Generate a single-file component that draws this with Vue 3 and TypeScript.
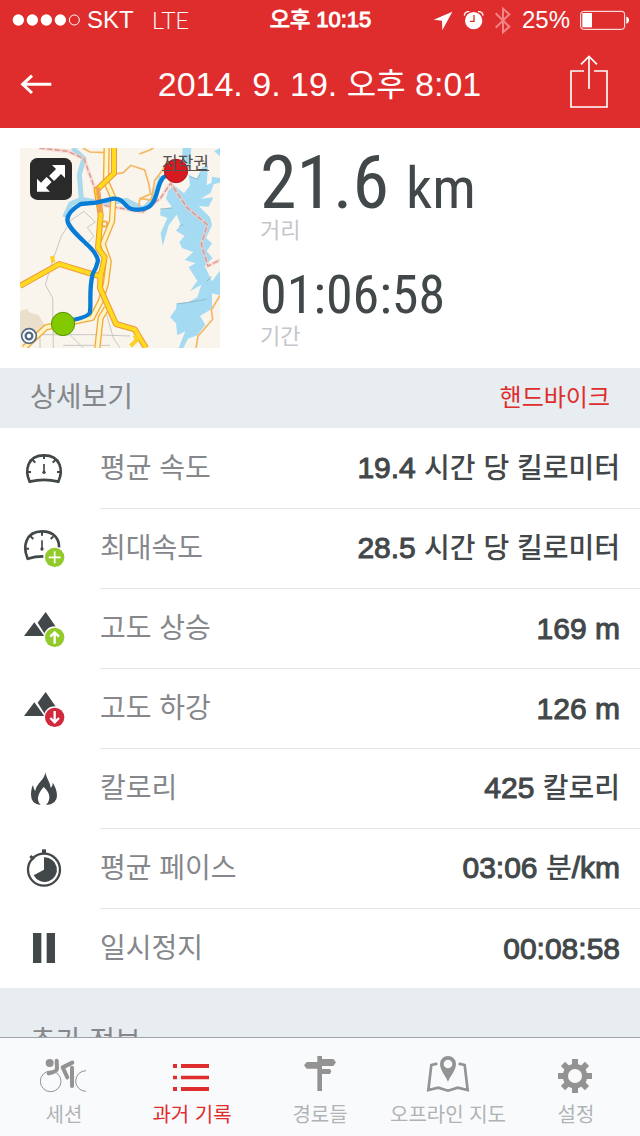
<script setup lang="ts">
type IconName = 'speed' | 'maxSpeed' | 'ascent' | 'descent' | 'calories' | 'pace' | 'pause'
type TabName = 'session' | 'history' | 'routes' | 'offline' | 'settings'

interface Detail {
  icon: IconName
  label: string
  value: string
  unit?: string
  suffix?: string
}

interface Tab {
  name: TabName
  label: string
}

const details: Detail[] = [
  { icon: 'speed', label: '평균 속도', value: '19.4', unit: '시간 당 킬로미터' },
  { icon: 'maxSpeed', label: '최대속도', value: '28.5', unit: '시간 당 킬로미터' },
  { icon: 'ascent', label: '고도 상승', value: '169 m' },
  { icon: 'descent', label: '고도 하강', value: '126 m' },
  { icon: 'calories', label: '칼로리', value: '425', unit: '칼로리' },
  { icon: 'pace', label: '평균 페이스', value: '03:06', unit: '분', suffix: '/km' },
  { icon: 'pause', label: '일시정지', value: '00:08:58' },
]

const tabs: Tab[] = [
  { name: 'session', label: '세션' },
  { name: 'history', label: '과거 기록' },
  { name: 'routes', label: '경로들' },
  { name: 'offline', label: '오프라인 지도' },
  { name: 'settings', label: '설정' },
]

const activeTab: TabName = 'history'
const gearAngles = [0, 45, 90, 135, 180, 225, 270, 315]
</script>

<template>
  <div class="app">
    <header class="top">
      <div class="status">
        <div class="status-left">
          <svg class="signal" viewBox="36 43 207 36" aria-hidden="true">
            <g fill="#fff">
              <circle cx="55" cy="61" r="17" />
              <circle cx="97" cy="61" r="17" />
              <circle cx="139" cy="61" r="17" />
              <circle cx="181" cy="61" r="17" />
            </g>
            <circle cx="223" cy="61" r="15" fill="none" stroke="#fff" stroke-width="3" />
          </svg>
          <span>SKT</span>
          <span class="network">LTE</span>
        </div>
        <div class="clock">오후 10:15</div>
        <div class="status-right">
          <svg class="i-loc" viewBox="333 30 60 63" aria-hidden="true">
            <path d="M391 35 L361 91 L360 62 L335 59 Z" fill="#fff" />
          </svg>
          <svg class="i-alarm" viewBox="426 30 63 63" aria-hidden="true">
            <circle cx="458" cy="62" r="26" fill="#fff" />
            <path d="M430 47 Q431 34 445 35 M471 35 Q485 34 486 47" fill="none" stroke="#fff" stroke-width="4" />
            <path d="M459 45 V64 H447" fill="none" stroke="#df2d2d" stroke-width="4" />
          </svg>
          <svg class="i-bt" viewBox="519 18 54 87" aria-hidden="true">
            <path d="M524 40 L565 80 L546 97 V26 L565 43 L524 83" fill="none" stroke="#f08486" stroke-width="6" />
          </svg>
          <span>25%</span>
          <svg class="i-battery" viewBox="780 31 147 60" aria-hidden="true">
            <rect x="782" y="35" width="132" height="54" rx="9" fill="none" stroke="#fff" stroke-width="3" />
            <rect x="787" y="40" width="29" height="43" fill="#fff" />
            <path d="M919 51 Q927 52 927 61 Q927 70 919 72 Z" fill="#fff" />
          </svg>
        </div>
      </div>
      <div class="titlebar">
        <button class="icon-button back" type="button" aria-label="뒤로">
          <svg viewBox="60 216 102 72" aria-hidden="true">
            <path d="M154 253 H68 M96 227 L68 253 L96 279" fill="none" stroke="#fff" stroke-width="9" />
          </svg>
        </button>
        <h1>2014. 9. 19. <span>오후</span> 8:01</h1>
        <button class="icon-button share" type="button" aria-label="공유">
          <svg viewBox="747 162 120 180" aria-hidden="true">
            <path d="M792 213 H753 V321 H861 V213 H822 M807 267 V169 M783 193 L807 169 L831 193" fill="none" stroke="#fff" stroke-width="5" />
          </svg>
        </button>
      </div>
    </header>

    <main class="content">
      <section class="summary">
        <div class="map">
          <svg class="map-art" viewBox="30 30 600 600" aria-hidden="true">
            <rect x="30" y="30" width="600" height="600" fill="#f9f4ec" />
            <path d="M30 520 L50 512 L60 524 L86 532 L104 562 L84 590 L52 602 L30 592Z" fill="#e9dfca" />
            <g fill="none" stroke="#c9c7c5" stroke-width="3">
              <path d="M176 260 L154 294 L122 386 L106 440 L128 480 L130 630 M178 250 L222 220 L256 252 L232 268 L252 296 L222 324 M70 590 H246 L360 594 M160 622 H300 M90 592 V630 M290 530 L310 600 L330 630 M180 590 L220 630" />
            </g>
            <g fill="#a4dbf3">
              <path d="M518 30 H544 L538 90 L520 110 L516 60Z" />
              <path d="M474 160 L490 140 L522 166 L540 142 L536 110 L560 122 L576 88 L594 84 L590 142 L614 130 L602 164 L572 182 L610 178 L596 206 L566 204 L600 238 L606 262 L588 300 L606 316 L590 340 L608 360 L584 384 L606 430 L630 398 V472 L606 466 L606 512 L570 534 L586 560 L562 592 L534 602 L520 630 H506 L526 580 L502 592 L498 556 L480 538 L498 512 L500 496 L536 492 L562 478 L574 440 L540 460 L562 428 L536 388 L556 376 L524 366 L550 342 L516 330 L508 312 L524 294 L498 278 L512 260 L500 230 L476 262 L458 324 L452 286 L472 240 L450 232 L452 214 L486 208 L468 182Z" />
              <path d="M606 116 L630 120 V134 L604 140Z M612 40 L630 30 V54Z" />
            </g>
            <path d="M500 498 L536 493 L590 484 M450 213 L486 210 M540 116 L562 124 L570 110 M590 430 L606 414 M508 264 L520 260" fill="none" stroke="#88a8b2" stroke-width="2" />
            <path d="M188 30 L222 62 L208 110 L214 184 L182 198 L164 238 M214 184 L270 194 L350 188 L400 214 L432 180 L454 116" fill="none" stroke="#a9d9ed" stroke-width="15" />
            <g fill="none" stroke="#f4b761" stroke-width="5">
              <path d="M218 30 L240 42 L286 44 M388 48 L420 36 L430 30 M318 108 L340 104 L362 82 L404 96 L416 136 L422 168 L390 182 L386 204 M390 182 L424 186 L434 128 L468 82" />
              <path d="M630 472 L604 516 L608 544 L564 594 L558 630" />
            </g>
            <path d="M88 30 L174 40 L222 62 L256 156 L270 200 L398 222 L452 180 L482 136 L532 210 L592 260 L574 320 L594 384 L630 366" fill="none" stroke="#f6cbc3" stroke-width="11" opacity=".6" />
            <path d="M88 30 L174 40 L222 62 L256 156 L270 200 L398 222 L452 180 L482 136 L532 210 L592 260 L574 320 L594 384 L630 366" fill="none" stroke="#d79690" stroke-width="4" stroke-dasharray="16 7" />
            <g fill="none" stroke-linejoin="round">
              <path d="M290 30 L288 130 L310 180 L306 250 L278 318 L296 370 L288 436 L272 490 L246 540 L108 568 L42 630 M290 510 L272 540 L262 630" stroke="#f1ab3c" stroke-width="19" />
              <path d="M290 30 L288 130 L310 180 L306 250 L278 318 L296 370 L288 436 L272 490 L246 540 L108 568 L42 630 M290 510 L272 540 L262 630" stroke="#fff4c5" stroke-width="11" />
              <path d="M312 30 V106 L260 156 L272 230 L264 330 L284 358 L272 416 L148 378 L30 444 M272 400 L270 450 L318 558 L374 574 L408 630" stroke="#ee963b" stroke-width="18" />
              <path d="M312 30 V106 L260 156 L272 230 L264 330 L284 358 L272 416 L148 378 L30 444 M272 400 L270 450 L318 558 L374 574 L408 630" stroke="#ffdb20" stroke-width="12" />
              <path d="M264 148 L270 224" stroke="#f0a257" stroke-width="12" />
              <path d="M126 354 L130 374 M374 592 L380 606 L362 624" stroke="#fbd02a" stroke-width="12" />
              <circle cx="284" cy="258" r="8" stroke="#f1ab3c" stroke-width="5" />
            </g>
            <circle cx="57" cy="594" r="22" fill="#fff" stroke="#556b83" stroke-width="5" />
            <circle cx="57" cy="594" r="10" fill="#fff" stroke="#556b83" stroke-width="7" />
            <path d="M158 552 Q238 538 240 522 C244 494 236 458 248 408 Q260 388 264 368 Q260 348 242 330 C214 302 174 270 172 246 Q172 222 212 198 L258 194 L310 182 C346 180 340 210 370 214 Q404 218 422 202 C446 178 438 144 460 118 L498 98" fill="none" stroke="#087dd7" stroke-width="13" stroke-linejoin="round" />
            <circle cx="498" cy="99" r="35" fill="#d71920" stroke="#b3131c" stroke-width="3" />
            <circle cx="159" cy="558" r="35" fill="#83c900" stroke="#599500" stroke-width="3" />
          </svg>
          <button class="icon-button expand" type="button" aria-label="지도 확대">
            <svg viewBox="60 60 126 126" aria-hidden="true">
              <rect x="60" y="60" width="126" height="126" rx="22" fill="#2b2a2a" />
              <path d="M126 81 H165 V120 L153 108 L132 129 L117 114 L138 93Z" fill="#fff" />
              <path d="M120 161 H81 V122 L93 134 L110 117 L125 132 L108 149Z" fill="#fff" />
              <path d="M111 112 L134 135" stroke="#2b2a2a" stroke-width="4" />
            </svg>
          </button>
          <a class="legal" href="#legal">저작권</a>
        </div>
        <dl class="stats">
          <div class="stat">
            <dd class="distance">21.6 <small>km</small></dd>
            <dt>거리</dt>
          </div>
          <div class="stat">
            <dd class="duration">01:06:58</dd>
            <dt>기간</dt>
          </div>
        </dl>
      </section>

      <div class="section-head">
        <h2>상세보기</h2>
        <a href="#sport">핸드바이크</a>
      </div>

      <dl class="details">
        <div v-for="d in details" :key="d.label" class="row">
          <svg v-if="d.icon === 'speed'" class="row-icon" viewBox="66 228 132 132" aria-hidden="true">
            <path d="M89 335 C74 302 81 256 132 256 C183 256 190 302 175 335 Q132 324 89 335Z" fill="none" stroke="#424749" stroke-width="8" />
            <path d="M132 256 V267 M98 270 L106 278 M166 270 L158 278 M82 306 H93 M182 306 H171" stroke="#424749" stroke-width="6" />
            <path d="M132 282 V308" stroke="#424749" stroke-width="5" />
            <circle cx="132" cy="307" r="5" fill="#424749" />
          </svg>
          <svg v-else-if="d.icon === 'maxSpeed'" class="row-icon" viewBox="66 468 132 132" aria-hidden="true">
            <path d="M130 559 Q105 559 83 566 C68 532 75 484 126 484 C163 484 178 508 177 532" fill="none" stroke="#424749" stroke-width="8" />
            <path d="M126 484 V497 M92 499 L100 507 M160 499 L152 507 M76 536 H87" stroke="#424749" stroke-width="6" />
            <path d="M126 511 V538" stroke="#424749" stroke-width="5" />
            <circle cx="126" cy="537" r="5" fill="#424749" />
            <circle cx="164" cy="562" r="29" fill="#93ca2b" />
            <path d="M164 544 V580 M146 562 H182" stroke="#fff" stroke-width="5" />
          </svg>
          <svg v-else-if="d.icon === 'ascent' || d.icon === 'descent'" class="row-icon" viewBox="66 48 132 132" aria-hidden="true">
            <path d="M137 66 L168 111 L138 138 L113 98Z M103 97 L133 138 H72Z" fill="#424749" />
            <circle cx="164" cy="142" r="33" fill="#fff" />
            <circle cx="164" cy="142" r="29" :fill="d.icon === 'ascent' ? '#93ca2b' : '#d1283d'" />
            <path v-if="d.icon === 'ascent'" d="M164 161 V127 M151 140 L164 127 L177 140" fill="none" stroke="#fff" stroke-width="7" />
            <path v-else d="M164 123 V157 M151 144 L164 157 L177 144" fill="none" stroke="#fff" stroke-width="7" />
          </svg>
          <svg v-else-if="d.icon === 'calories'" class="row-icon" viewBox="66 48 132 132" aria-hidden="true">
            <path d="M136 66 C139 86 150 94 152 113 Q159 108 158 98 C166 110 171 122 171 137 Q171 162 138 165 C154 149 151 128 131 111 C113 132 108 150 122 165 Q93 162 93 134 C93 122 95 113 99 105 Q101 118 106 123 C108 100 135 90 136 66Z" fill="#424749" />
          </svg>
          <svg v-else-if="d.icon === 'pace'" class="row-icon" viewBox="66 288 132 132" aria-hidden="true">
            <circle cx="132" cy="359" r="48" fill="none" stroke="#424749" stroke-width="7" />
            <path d="M126 298 H138 V310 H126Z" fill="#424749" />
            <path d="M91 318 L101 328" stroke="#424749" stroke-width="9" />
            <path d="M132 359 V322 A37 37 0 1 1 101 376Z" fill="#424749" />
          </svg>
          <svg v-else class="row-icon" viewBox="66 528 132 132" aria-hidden="true">
            <path d="M99 549 H124 V639 H99Z M140 549 H165 V639 H140Z" fill="#424749" />
          </svg>
          <div class="row-body">
            <dt>{{ d.label }}</dt>
            <dd>{{ d.value }}<template v-if="d.unit">{{ ' ' }}<span>{{ d.unit }}</span></template>{{ d.suffix }}</dd>
          </div>
        </div>
      </dl>

      <div class="section-head more">
        <h2>추가 정보</h2>
      </div>
    </main>

    <nav class="tabs">
      <a
        v-for="t in tabs"
        :key="t.name"
        :href="'#' + t.name"
        class="tab"
        :class="{ active: t.name === activeTab }"
        :aria-current="t.name === activeTab ? 'page' : undefined"
      >
        <svg v-if="t.name === 'session'" viewBox="120 210 144 120" aria-hidden="true">
          <g fill="none" stroke="#939393" stroke-linejoin="round">
            <circle cx="152" cy="289" r="31" stroke-width="3" />
            <path d="M258 257 A31 31 0 0 0 258 319" stroke-width="3" />
            <path d="M170 227 L171 251 Q170 260 146 265" stroke-width="12" stroke-linecap="round" />
            <path d="M217 233 L188 247 L202 277" stroke-width="12" stroke-linecap="round" />
            <path d="M216 248 V303" stroke-width="12" stroke-linecap="round" />
          </g>
          <circle cx="149" cy="234" r="12" fill="#939393" />
        </svg>
        <svg v-else-if="t.name === 'history'" viewBox="504 210 144 120" aria-hidden="true">
          <path d="M519 237 H531 V249 H519Z M543 237 H627 V249 H543Z M519 272 H531 V283 H519Z M543 272 H627 V283 H543Z M519 306 H531 V318 H519Z M543 306 H627 V318 H543Z" fill="#df2d2d" />
        </svg>
        <svg v-else-if="t.name === 'routes'" viewBox="888 210 144 120" aria-hidden="true">
          <path d="M952 213 H966 V222 H1000 L1008 232 L1000 243 H966 V252 H990 L994 259 L990 267 H966 V318 H952 V251 H920 L912 241 L920 231 H952Z" fill="#939393" />
        </svg>
        <svg v-else-if="t.name === 'offline'" viewBox="312 210 144 120" aria-hidden="true">
          <path d="M352 236 L334 240 L325 315 L355 308 L384 317 L413 308 L443 315 L434 240 L416 236" fill="none" stroke="#939393" stroke-width="8" />
          <path fill-rule="evenodd" d="M384 291 C379 275 360 257 360 237 A24 24 0 0 1 408 237 C408 257 389 275 384 291Z M384 224 A13 13 0 1 0 384 250 A13 13 0 1 0 384 224Z" fill="#939393" />
        </svg>
        <svg v-else viewBox="696 210 144 120" aria-hidden="true">
          <circle cx="765" cy="273" r="29" fill="none" stroke="#939393" stroke-width="16" />
          <rect v-for="a in gearAngles" :key="a" x="756" y="222" width="18" height="20" fill="#939393" :transform="`rotate(${a} 765 273)`" />
        </svg>
        <span>{{ t.label }}</span>
      </a>
    </nav>
  </div>
</template>

<style>
body {
  margin: 0;
}
</style>

<style scoped>
.app {
  display: flex;
  flex-direction: column;
  height: 100vh;
  background: #fff;
  color: #424749;
  font-family: "Liberation Sans", "Noto Sans CJK KR", sans-serif;
}

h1,
h2,
dl,
dd,
dt {
  margin: 0;
  font-weight: 400;
}

a {
  color: inherit;
  text-decoration: none;
}

svg {
  display: block;
}

.icon-button {
  padding: 0;
  border: 0;
  background: none;
}

.top {
  flex: none;
  background: #df2d2d;
  color: #fff;
}

.status {
  display: grid;
  grid-template-columns: 1fr auto 1fr;
  align-items: center;
  height: 40px;
  padding: 0 11px 0 12px;
  font-size: 24px;
  line-height: 40px;
}

.status-left,
.status-right {
  display: flex;
  align-items: center;
}

.status-left {
  gap: 6px;
}

.status-right {
  justify-content: flex-end;
  gap: 10px;
}

.signal {
  width: 69px;
  height: 12px;
}

.network {
  margin-left: 12px;
  font-family: Lato, sans-serif;
  font-weight: 300;
}

.clock {
  font-size: 22px;
  -webkit-text-stroke: 1px currentColor;
}

.i-loc {
  width: 20px;
  height: 21px;
}

.i-alarm {
  width: 21px;
  height: 21px;
}

.i-bt {
  width: 18px;
  height: 29px;
}

.i-battery {
  width: 49px;
  height: 20px;
}

.titlebar {
  display: grid;
  grid-template-columns: 1fr auto 1fr;
  align-items: center;
  height: 88px;
  padding: 0 31px 0 20px;
}

.titlebar h1 {
  font-size: 34px;
  line-height: 40px;
  padding-left: 10px;
}

.titlebar h1 span {
  font-size: 32px;
}

.back svg {
  width: 34px;
  height: 24px;
}

.share {
  justify-self: end;
}

.share svg {
  width: 40px;
  height: 60px;
}

.content {
  flex: 1;
  min-height: 0;
  overflow-y: auto;
  scrollbar-width: none;
}

.summary {
  display: flex;
  gap: 40px;
  padding: 20px;
}

.map {
  position: relative;
  flex: none;
  width: 200px;
  height: 200px;
}

.map-art {
  width: 100%;
  height: 100%;
}

.expand {
  position: absolute;
  top: 10px;
  left: 10px;
}

.expand svg {
  width: 42px;
  height: 42px;
}

.legal {
  position: absolute;
  top: 4px;
  right: 11px;
  color: #55504d;
  font-size: 17px;
  line-height: 24px;
  text-decoration: underline;
}

.stats {
  display: flex;
  flex-direction: column;
  gap: 29px;
  padding-top: 5px;
}

.stat {
  display: flex;
  flex-direction: column;
  gap: 7px;
}

.stat dd {
  font-family: "Roboto Condensed", "Liberation Sans Narrow", "Liberation Sans", sans-serif;
}

.distance {
  font-size: 74px;
  line-height: 60px;
}

.distance small {
  font-size: 58px;
  line-height: 1px;
}

.duration {
  font-size: 54px;
  line-height: 48px;
}

.stat dt {
  color: #c3c6cb;
  font-size: 22px;
  line-height: 22px;
}

.section-head {
  display: flex;
  align-items: center;
  justify-content: space-between;
  height: 60px;
  padding: 0 30px;
  background: #e8edf1;
}

.section-head h2 {
  color: #85878b;
  font-size: 28px;
  line-height: 40px;
}

.section-head a {
  color: #df2d2d;
  font-size: 24px;
  line-height: 40px;
}

.section-head.more {
  height: 108px;
}

.row {
  display: flex;
  align-items: center;
  height: 80px;
}

.row-icon {
  flex: none;
  width: 44px;
  height: 44px;
  margin: 0 34px 0 22px;
}

.row-body {
  display: flex;
  flex: 1;
  align-items: center;
  justify-content: space-between;
  box-sizing: border-box;
  height: 80px;
  padding-right: 20px;
  border-top: 1px solid #e2e5e8;
}

.row:first-child .row-body {
  border-top-color: transparent;
}

.row-body dt {
  color: #85878b;
  font-size: 28px;
  line-height: 40px;
}

.row-body dd {
  font-size: 30px;
  line-height: 40px;
  -webkit-text-stroke: 1px currentColor;
}

.row-body dd span {
  font-size: 28px;
  -webkit-text-stroke-width: 0;
  font-weight: 500;
}

.tabs {
  display: grid;
  flex: none;
  grid-template-columns: repeat(5, 1fr);
  box-sizing: border-box;
  height: 99px;
  border-top: 1px solid #a0a4aa;
  background: #f9fafc;
}

.tab {
  display: flex;
  flex-direction: column;
  align-items: center;
  gap: 6px;
  padding-top: 17px;
  color: #b0b3b5;
  font-size: 20px;
  line-height: 28px;
  white-space: nowrap;
}

.tab svg {
  width: 48px;
  height: 40px;
}

.tab.active {
  color: #df2d2d;
}
</style>
